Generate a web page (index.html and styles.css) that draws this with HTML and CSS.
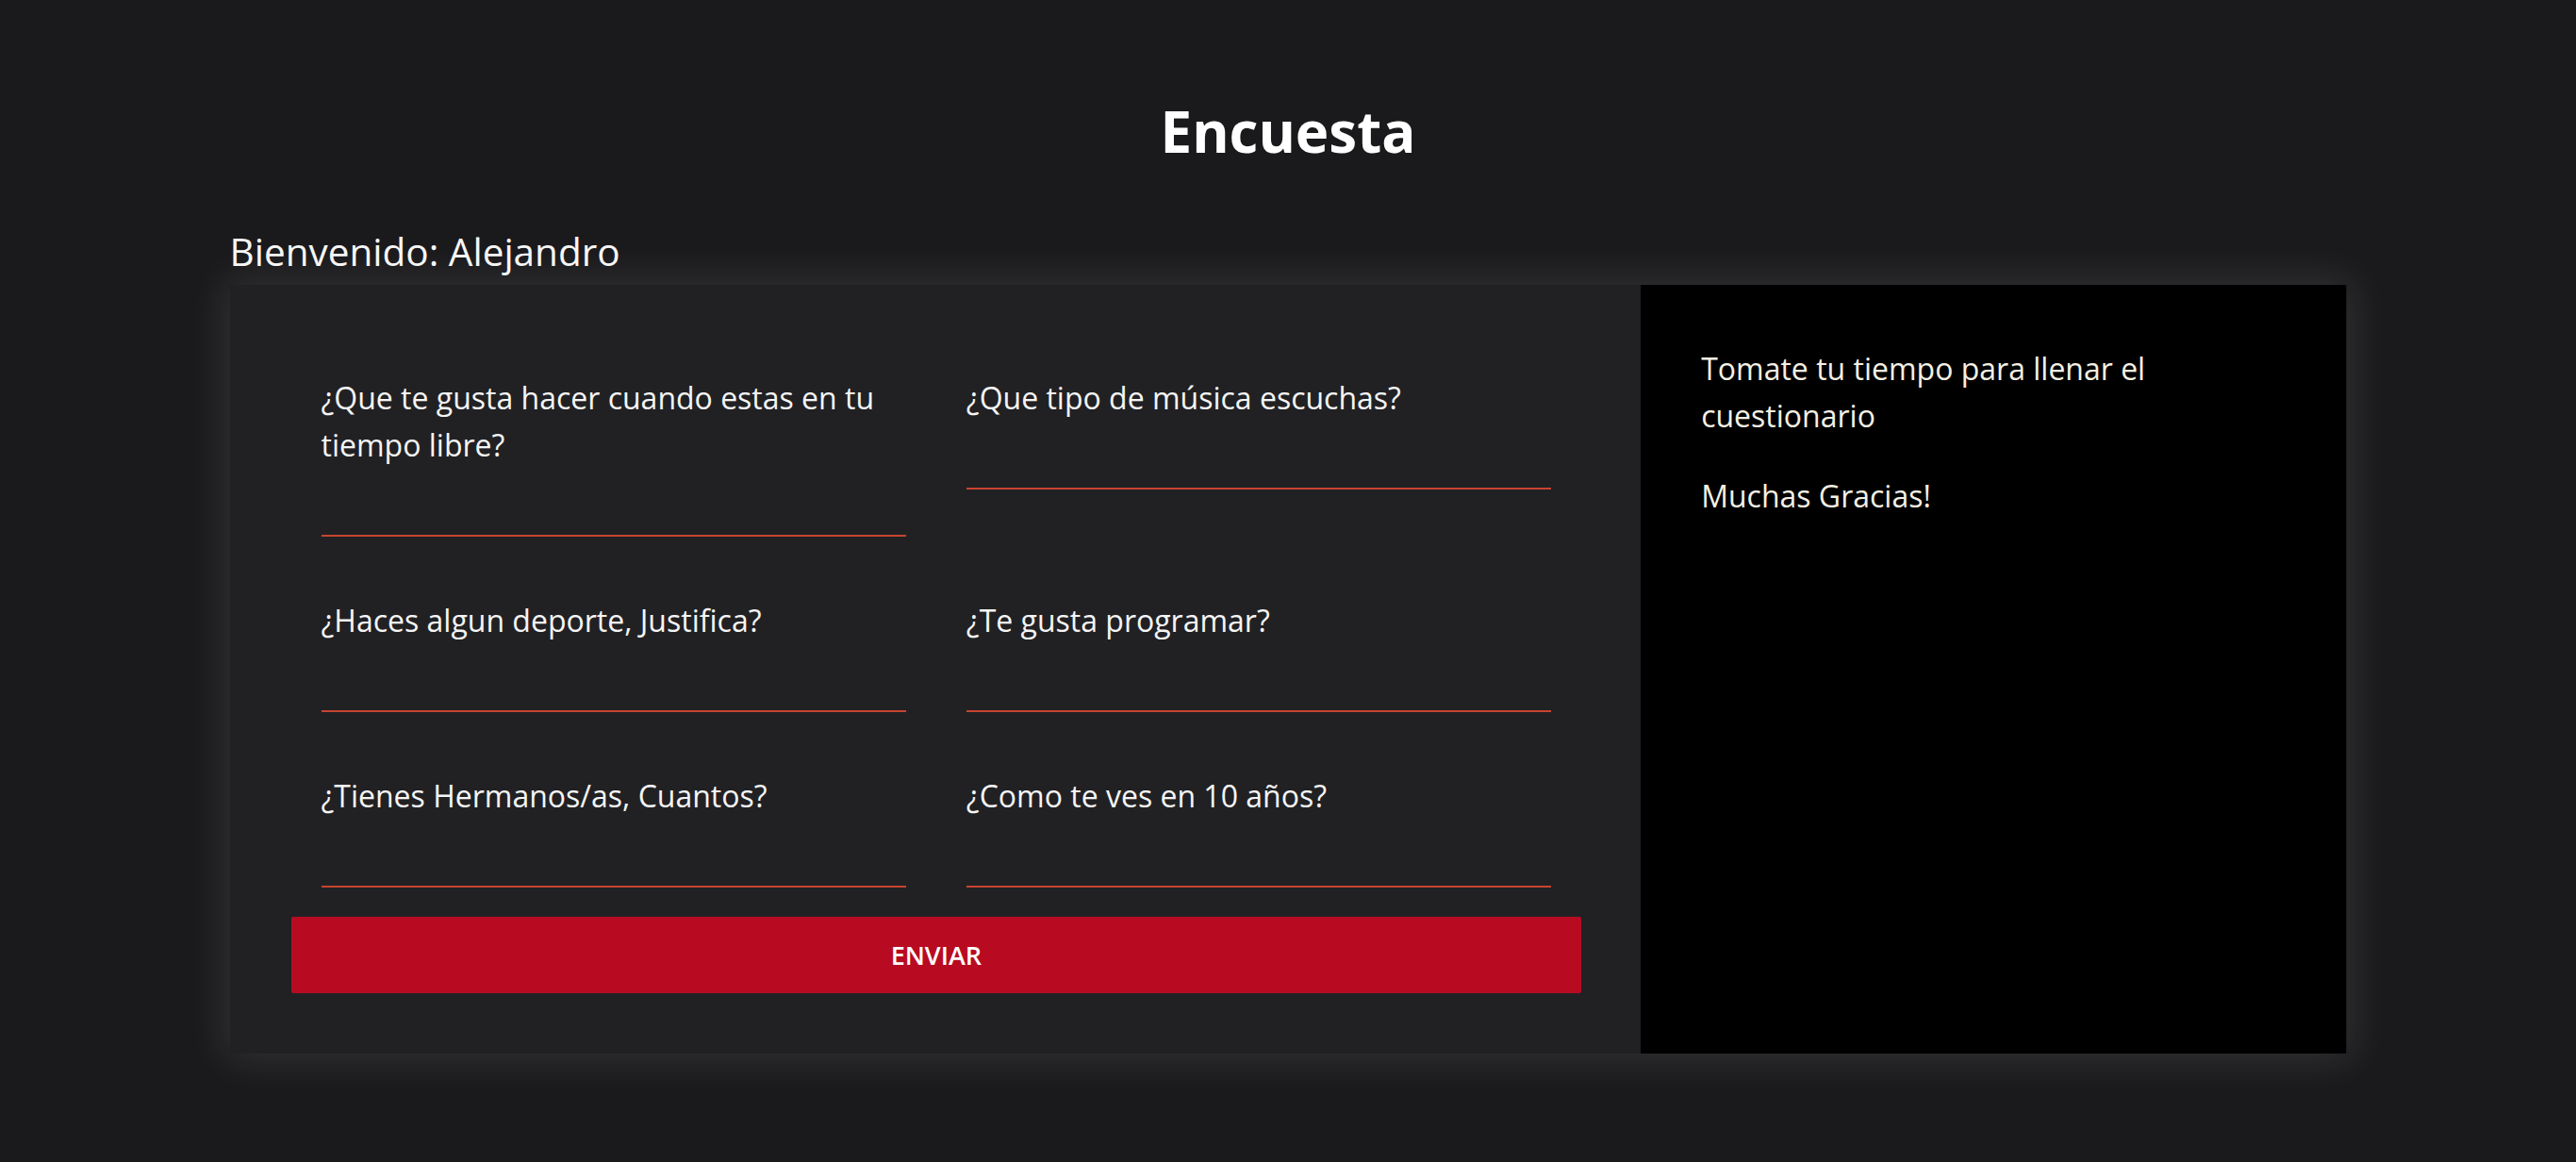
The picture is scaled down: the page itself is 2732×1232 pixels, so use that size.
FILE: index.html
```html
<!DOCTYPE html>
<html lang="es">
<head>
<meta charset="utf-8">
<title>Encuesta</title>
<link rel="stylesheet" href="styles.css">
</head>
<body>
<main class="page">
  <h1 class="title">Encuesta</h1>
  <p class="welcome">Bienvenido: Alejandro</p>
  <section class="card">
    <form class="survey">
      <div class="questions">
        <label class="field">
          <span class="field-label">¿Que te gusta hacer cuando estas en tu tiempo libre?</span>
          <input class="field-input" type="text">
        </label>
        <label class="field">
          <span class="field-label">¿Que tipo de música escuchas?</span>
          <input class="field-input" type="text">
        </label>
        <label class="field">
          <span class="field-label">¿Haces algun deporte, Justifica?</span>
          <input class="field-input" type="text">
        </label>
        <label class="field">
          <span class="field-label">¿Te gusta programar?</span>
          <input class="field-input" type="text">
        </label>
        <label class="field">
          <span class="field-label">¿Tienes Hermanos/as, Cuantos?</span>
          <input class="field-input" type="text">
        </label>
        <label class="field">
          <span class="field-label">¿Como te ves en 10 años?</span>
          <input class="field-input" type="text">
        </label>
      </div>
      <button class="submit" type="button">Enviar</button>
    </form>
    <aside class="note">
      <p class="note-text">Tomate tu tiempo para llenar el cuestionario</p>
      <p class="note-text">Muchas Gracias!</p>
    </aside>
  </section>
</main>
</body>
</html>
```

FILE: styles.css
```css
* {
  box-sizing: border-box;
}

html, body {
  margin: 0;
  padding: 0;
}

body {
  background: #1a1a1d;
  color: #f4f4f4;
  font-family: "Open Sans", "Noto Sans", sans-serif;
  min-height: 1232px;
}

.page {
  width: 2245px;
  margin: 0 auto;
  padding-top: 103px;
}

.title {
  margin: 0;
  text-align: center;
  font-size: 60px;
  line-height: 73px;
  font-weight: 700;
  color: #ffffff;
}

.welcome {
  margin: 67px 0 11px;
  font-size: 40.5px;
  line-height: 48px;
  font-weight: 400;
  color: #f6f6f6;
}

.card {
  display: grid;
  grid-template-columns: 2fr 1fr;
  box-shadow: 0 0 40px 6px rgba(255, 255, 255, 0.11);
}

.survey {
  background: #212124;
  padding: 95px 63px 64px 65px;
}

.questions {
  display: grid;
  grid-template-columns: 1fr 1fr;
  column-gap: 64px;
  row-gap: 64px;
  padding: 0 32px;
  align-items: start;
}

.field {
  display: flex;
  flex-direction: column;
}

.field-label {
  font-size: 32px;
  line-height: 50px;
  color: #f5f5f5;
}

.field-input {
  height: 72px;
  background: transparent;
  border: none;
  border-bottom: 2px solid #c8442f;
  color: #ffffff;
  font: inherit;
  font-size: 28px;
  outline: none;
  padding: 0;
}

.submit {
  display: block;
  width: 100%;
  height: 81px;
  margin-top: 31px;
  background: #b80b22;
  border: none;
  border-radius: 2px;
  color: #ffffff;
  font-family: "Open Sans", sans-serif;
  font-size: 27px;
  font-weight: 600;
  text-transform: uppercase;
}

.note {
  background: #000000;
  padding: 64px 64px;
}

.note-text {
  margin: 0 0 35px;
  font-size: 32px;
  line-height: 50px;
  color: #f4f0e4;
}
```
